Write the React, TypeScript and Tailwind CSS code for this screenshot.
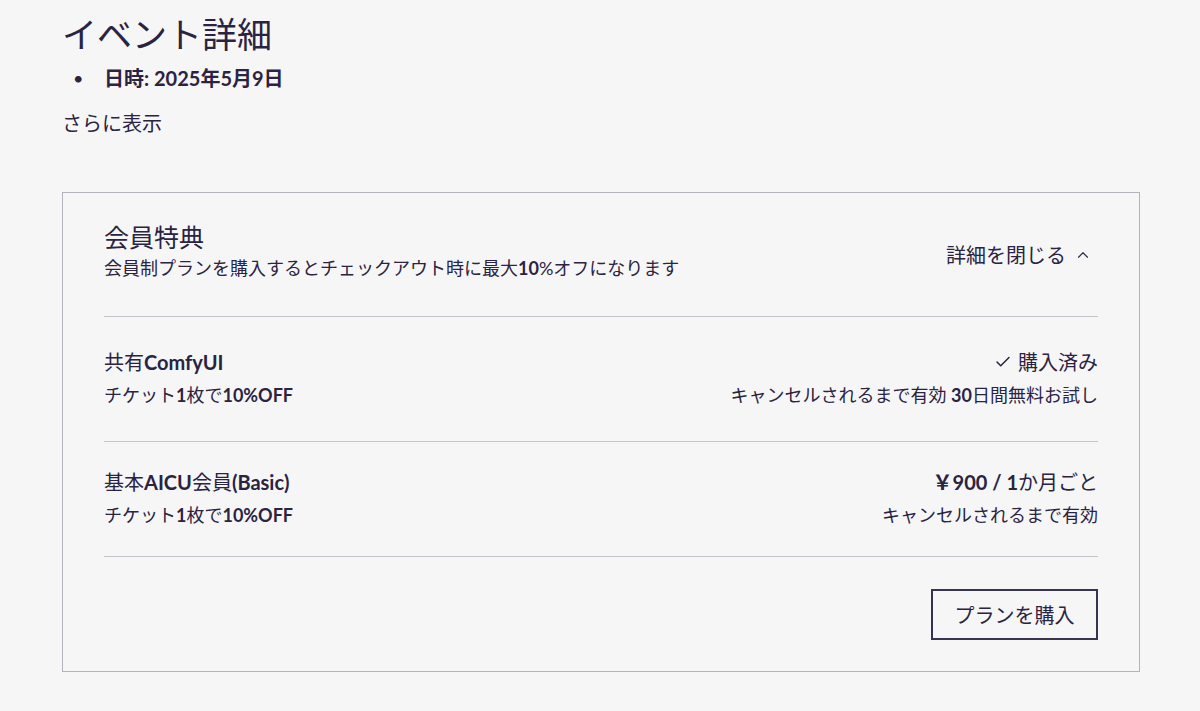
import { Check, ChevronUp } from "lucide-react";

const FONT = { fontFamily: 'Lato, "Noto Sans CJK JP", sans-serif' };

interface Plan {
  name: string;
  benefit: string;
  right: React.ReactNode;
  note: React.ReactNode;
  pad: string;
}

const PLANS: Plan[] = [
  {
    name: "共有ComfyUI",
    benefit: "チケット1枚で10%OFF",
    right: (
      <span className="flex items-center gap-1.5 font-normal">
        <Check className="h-[18px] w-[18px]" strokeWidth={2} />
        購入済み
      </span>
    ),
    note: (
      <>
        キャンセルされるまで有効 <span className="font-bold">30</span>日間無料お試し
      </>
    ),
    pad: "pt-[32px] pb-[34px]",
  },
  {
    name: "基本AICU会員(Basic)",
    benefit: "チケット1枚で10%OFF",
    right: (
      <span>
        <span className="font-bold">￥900 / 1</span>か月ごと
      </span>
    ),
    note: <>キャンセルされるまで有効</>,
    pad: "pt-[27px] pb-[29px]",
  },
];

function Bold10({ text }: { text: string }) {
  // 数字と英字だけ太字にする
  const parts = text.split(/([0-9A-Za-z%()]+)/);
  return (
    <>
      {parts.map((p, i) =>
        /^[0-9A-Za-z%()]+$/.test(p) ? (
          <span key={i} className="font-bold">
            {p}
          </span>
        ) : (
          <span key={i}>{p}</span>
        )
      )}
    </>
  );
}

export default function App() {
  return (
    <div className="min-h-[711px] bg-[#f6f6f6] text-[#2a2342]" style={FONT}>
      <div className="px-[62px] pt-[12px]">
        <h1 className="text-[35px] leading-[44px]">イベント詳細</h1>
        <div className="mt-[10px] flex items-center text-[20px] leading-[24px]">
          <span className="w-[42px] pl-[11px] text-[18px]">•</span>
          <span className="font-bold">日時: 2025年5月9日</span>
        </div>
        <p className="mt-[21px] text-[20px] leading-[24px]">さらに表示</p>

        <section className="mt-[57px] w-[1078px] border border-[#b3b2be] px-[41px] pb-[31px] pt-[29px]">
          <div className="flex items-center justify-between pb-[36px]">
            <div>
              <h2 className="text-[25px] leading-[30px]">会員特典</h2>
              <p className="mt-[4px] text-[18px] leading-[24px]">
                会員制プランを購入するとチェックアウト時に最大<span className="font-bold">10</span>%オフになります
              </p>
            </div>
            <button className="mt-[8px] flex items-center gap-2 pr-[6px] text-[20px] leading-[24px]">
              詳細を閉じる
              <ChevronUp className="h-[18px] w-[18px]" strokeWidth={1.5} />
            </button>
          </div>

          {PLANS.map((p) => (
            <div
              key={p.name}
              className={`flex justify-between border-t border-[#c6c5cb] ${p.pad}`}
            >
              <div>
                <p className="text-[20px] leading-[26px]">
                  <Bold10 text={p.name} />
                </p>
                <p className="mt-[8px] text-[18px] leading-[24px]">
                  <Bold10 text={p.benefit} />
                </p>
              </div>
              <div className="flex flex-col items-end">
                <p className="text-[20px] leading-[26px]">{p.right}</p>
                <p className="mt-[8px] text-[18px] leading-[24px]">{p.note}</p>
              </div>
            </div>
          ))}

          <div className="flex justify-end border-t border-[#c6c5cb] pt-[32px]">
            <button className="h-[51px] w-[167px] border-2 border-[#3a3350] text-[20px]">
              プランを購入
            </button>
          </div>
        </section>
      </div>
    </div>
  );
}
